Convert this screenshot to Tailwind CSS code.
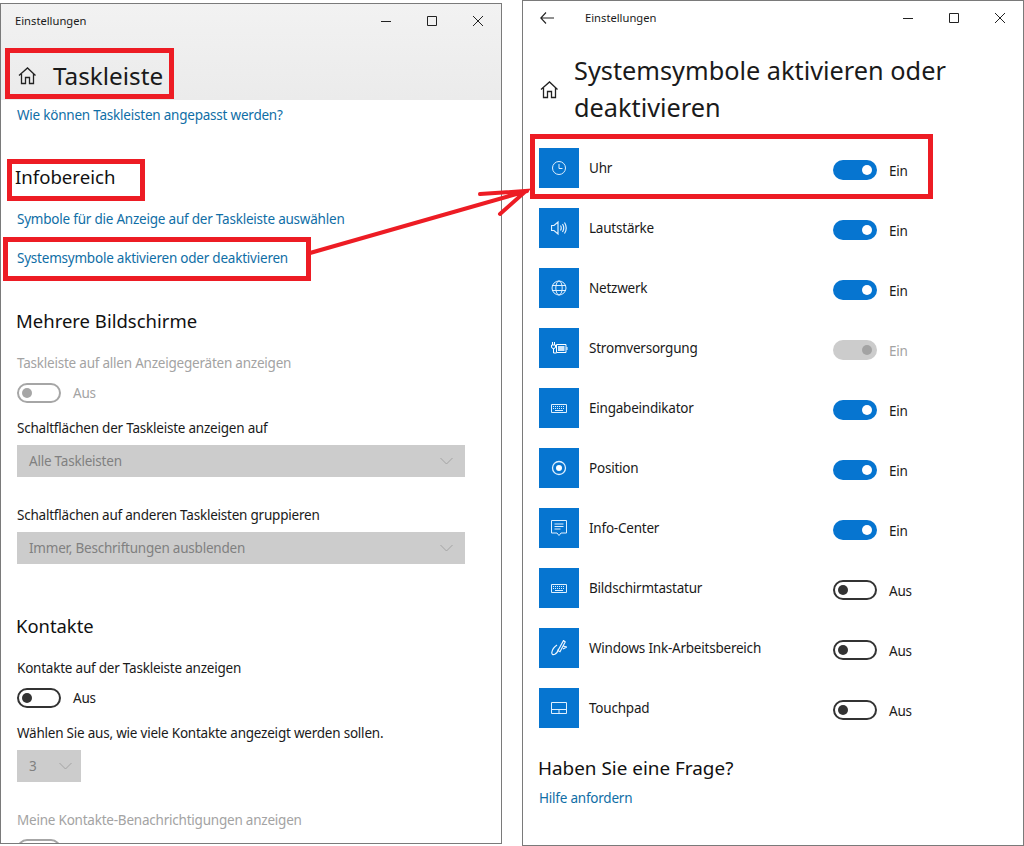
<!DOCTYPE html>
<html lang="de">
<head>
<meta charset="UTF-8">
<title>Einstellungen</title>
<script src="https://cdn.jsdelivr.net/npm/@tailwindcss/browser@4"></script>
</head>
<body class="bg-white">
<div class="relative w-[1024px] h-[846px] overflow-hidden font-['Noto_Sans',sans-serif] text-[13.5px] tracking-[-0.22px] leading-5 text-[#1a1a1a]">
  <div class="flex gap-5 items-start">

    <!-- left window -->
    <section class="mt-[3px] w-[502px] h-[841px] border border-[#7a7a7a] overflow-hidden shrink-0">
      <header class="h-[96px] bg-linear-to-b from-[#f2f2f2] to-[#ebebeb]">
        <div class="h-[34px] flex items-center pl-[14px]">
          <span class="text-[11.2px] tracking-normal">Einstellungen</span>
          <div class="ml-auto flex text-[#222]">
            <svg class="w-[46px] h-4" viewBox="0 0 46 16" fill="none" stroke="currentColor"><path d="M18 8.5h10"/></svg>
            <svg class="w-[46px] h-4" viewBox="0 0 46 16" fill="none" stroke="currentColor"><path d="M18.5 3.5h9v9h-9z"/></svg>
            <svg class="w-[46px] h-4" viewBox="0 0 46 16" fill="none" stroke="currentColor"><path d="M18 3l10 10M28 3L18 13"/></svg>
          </div>
        </div>
        <div class="flex items-center pl-[17px] mt-[9px] h-[56px]">
          <svg class="w-[19px] h-[19px]" viewBox="0 0 19 19" fill="none" stroke="#222" stroke-width="1.3"><path d="M1 9.5L9.5 2l8 7.5M3.5 8v9.5h4v-6h4v6h4V8"/></svg>
          <h1 class="ml-[16px] text-[24.3px] tracking-normal leading-8 mt-[1px]">Taskleiste</h1>
        </div>
      </header>
      <div class="pl-4">
        <a class="block mt-[5px] text-[#0f6ea6]">Wie können Taskleisten angepasst werden?</a>
        <h2 class="mt-[38px] -ml-[2px] text-[18.6px] tracking-normal leading-7 text-[#111]">Infobereich</h2>
        <a class="block mt-[18px] text-[#0f6ea6]">Symbole für die Anzeige auf der Taskleiste auswählen</a>
        <a class="block mt-[19px] text-[#0f6ea6]">Systemsymbole aktivieren oder deaktivieren</a>
        <h2 class="mt-[39px] -ml-[1px] text-[18.5px] tracking-normal leading-7 text-[#111]">Mehrere Bildschirme</h2>
        <p class="mt-[18px] text-[#a3a3a3]">Taskleiste auf allen Anzeigegeräten anzeigen</p>
        <div class="mt-[10px] flex items-center h-5">
          <span class="w-11 h-5 rounded-full border-2 border-[#a6a6a6] flex items-center pl-[3px]"><i class="w-[10px] h-[10px] rounded-full bg-[#a6a6a6]"></i></span>
          <span class="ml-3 text-[#a3a3a3]">Aus</span>
        </div>
        <p class="mt-[15px]">Schaltflächen der Taskleiste anzeigen auf</p>
        <div class="mt-[7px] w-[448px] h-8 bg-[#cccccc] flex items-center pl-3 pr-[12px] text-[#808080]">
          <span>Alle Taskleisten</span>
          <svg class="ml-auto w-[13px] h-[8px]" viewBox="0 0 13 8" fill="none" stroke="#a3a3a3"><path d="M.5 1l6 6 6-6"/></svg>
        </div>
        <p class="mt-[28px]">Schaltflächen auf anderen Taskleisten gruppieren</p>
        <div class="mt-[7px] w-[448px] h-8 bg-[#cccccc] flex items-center pl-3 pr-[12px] text-[#808080]">
          <span>Immer, Beschriftungen ausblenden</span>
          <svg class="ml-auto w-[13px] h-[8px]" viewBox="0 0 13 8" fill="none" stroke="#a3a3a3"><path d="M.5 1l6 6 6-6"/></svg>
        </div>
        <h2 class="mt-[48px] -ml-[1px] text-[18.4px] tracking-normal leading-7 text-[#111]">Kontakte</h2>
        <p class="mt-[18px]">Kontakte auf der Taskleiste anzeigen</p>
        <div class="mt-[10px] flex items-center h-5">
          <span class="w-11 h-5 rounded-full border-2 border-[#333] flex items-center pl-[3px]"><i class="w-[10px] h-[10px] rounded-full bg-[#333]"></i></span>
          <span class="ml-3">Aus</span>
        </div>
        <p class="mt-[15px]">Wählen Sie aus, wie viele Kontakte angezeigt werden sollen.</p>
        <div class="mt-[7px] w-16 h-8 bg-[#cccccc] flex items-center pl-3 pr-[9px] text-[#808080]">
          <span>3</span>
          <svg class="ml-auto w-[13px] h-[8px]" viewBox="0 0 13 8" fill="none" stroke="#a3a3a3"><path d="M.5 1l6 6 6-6"/></svg>
        </div>
        <p class="mt-[28px] text-[#a3a3a3]">Meine Kontakte-Benachrichtigungen anzeigen</p>
        <span class="block mt-[9px] w-11 h-5 rounded-full border-2 border-[#a6a6a6]"></span>
      </div>
    </section>

    <!-- right window -->
    <section class="w-[502px] h-[846px] border border-[#7a7a7a] shrink-0">
      <div class="h-[33px] flex items-center pl-[17px]">
        <svg class="w-[14px] h-[12px]" viewBox="0 0 14 12" fill="none" stroke="#222" stroke-width="1.1"><path d="M6 .5L.8 6 6 11.5M1 6h13"/></svg>
        <span class="ml-[31px] text-[11.2px] tracking-normal">Einstellungen</span>
        <div class="ml-auto flex text-[#222]">
          <svg class="w-[46px] h-4" viewBox="0 0 46 16" fill="none" stroke="currentColor"><path d="M18 8.5h10"/></svg>
          <svg class="w-[46px] h-4" viewBox="0 0 46 16" fill="none" stroke="currentColor"><path d="M18.5 3.5h9v9h-9z"/></svg>
          <svg class="w-[46px] h-4" viewBox="0 0 46 16" fill="none" stroke="currentColor"><path d="M18 3l10 10M28 3L18 13"/></svg>
        </div>
      </div>
      <div class="flex items-center pl-[17px] mt-[18px]">
        <svg class="w-[19px] h-[19px] mt-[1px]" viewBox="0 0 19 19" fill="none" stroke="#222" stroke-width="1.3"><path d="M1 9.5L9.5 2l8 7.5M3.5 8v9.5h4v-6h4v6h4V8"/></svg>
        <h1 class="ml-[15px] text-[25.3px] tracking-normal leading-[37px] w-[430px]">Systemsymbole aktivieren oder deaktivieren</h1>
      </div>
      <ul class="mt-[22px] ml-4 flex flex-col gap-5">
        <li class="flex h-10">
          <span class="w-10 h-10 bg-[#0675d0] flex items-center justify-center">
            <svg class="w-4 h-4" viewBox="0 0 16 16" fill="none" stroke="#dff0ff"><circle cx="8" cy="8" r="6.5"/><path d="M8 4v4.5h3.5"/></svg>
          </span>
          <span class="ml-[10px] w-[244px] mt-[10px]">Uhr</span>
          <span class="w-11 h-5 mt-3 rounded-full bg-[#0675d0] flex items-center justify-end pr-[5px]"><i class="w-[10px] h-[10px] rounded-full bg-white"></i></span>
          <span class="ml-3 mt-[13px]">Ein</span>
        </li>
        <li class="flex h-10">
          <span class="w-10 h-10 bg-[#0675d0] flex items-center justify-center">
            <svg class="w-4 h-4" viewBox="0 0 16 16" fill="none" stroke="#dff0ff" stroke-width="1.2"><path d="M.5 5.500h2.500l4-3.500v12l-4-3.500H.5zM9.500 5.500q1.500 2.500 0 5M11.500 4q2.500 4 0 8M13.500 2.500q3.500 5.500 0 11"/></svg>
          </span>
          <span class="ml-[10px] w-[244px] mt-[10px]">Lautstärke</span>
          <span class="w-11 h-5 mt-3 rounded-full bg-[#0675d0] flex items-center justify-end pr-[5px]"><i class="w-[10px] h-[10px] rounded-full bg-white"></i></span>
          <span class="ml-3 mt-[13px]">Ein</span>
        </li>
        <li class="flex h-10">
          <span class="w-10 h-10 bg-[#0675d0] flex items-center justify-center">
            <svg class="w-4 h-4" viewBox="0 0 16 16" fill="none" stroke="#dff0ff"><circle cx="8" cy="8" r="7"/><ellipse cx="8" cy="8" rx="3.200" ry="7"/><path d="M1 5.500h14M1 10.500h14"/></svg>
          </span>
          <span class="ml-[10px] w-[244px] mt-[10px]">Netzwerk</span>
          <span class="w-11 h-5 mt-3 rounded-full bg-[#0675d0] flex items-center justify-end pr-[5px]"><i class="w-[10px] h-[10px] rounded-full bg-white"></i></span>
          <span class="ml-3 mt-[13px]">Ein</span>
        </li>
        <li class="flex h-10">
          <span class="w-10 h-10 bg-[#0675d0] flex items-center justify-center">
            <svg class="w-[17px] h-3" viewBox="0 0 17 12" fill="none" stroke="#ffffff"><path d="M1.500 0v3M3.500 0v3M.5 3h4v2q0 1.500-2 1.500t-2-1.500zM2.500 6.500v4.500h3"/><path d="M5.500 2.500h9.500v8H5.500z"/><path d="M7 4h6.500v5H7z" fill="#cfe6fa" stroke="none"/><path d="M16 5v3"/></svg>
          </span>
          <span class="ml-[10px] w-[244px] mt-[10px]">Stromversorgung</span>
          <span class="w-11 h-5 mt-3 rounded-full bg-[#cccccc] flex items-center justify-end pr-[5px]"><i class="w-[10px] h-[10px] rounded-full bg-[#a3a3a3]"></i></span>
          <span class="ml-3 mt-[13px] text-[#a3a3a3]">Ein</span>
        </li>
        <li class="flex h-10">
          <span class="w-10 h-10 bg-[#0675d0] flex items-center justify-center">
            <svg class="w-4 h-3" viewBox="0 0 16 12" fill="none" stroke="#dff0ff"><path d="M.5 2.500h15v8H.5z"/><path d="M2 4.500h12M2 6.500h12" stroke-dasharray="1 1"/><path d="M4 8.500h8"/></svg>
          </span>
          <span class="ml-[10px] w-[244px] mt-[10px]">Eingabeindikator</span>
          <span class="w-11 h-5 mt-3 rounded-full bg-[#0675d0] flex items-center justify-end pr-[5px]"><i class="w-[10px] h-[10px] rounded-full bg-white"></i></span>
          <span class="ml-3 mt-[13px]">Ein</span>
        </li>
        <li class="flex h-10">
          <span class="w-10 h-10 bg-[#0675d0] flex items-center justify-center">
            <svg class="w-4 h-4" viewBox="0 0 16 16" fill="none" stroke="#dff0ff"><circle cx="8" cy="8" r="6.500" stroke-width="1.300"/><circle cx="8" cy="8" r="3" fill="#fff" stroke="none"/></svg>
          </span>
          <span class="ml-[10px] w-[244px] mt-[10px]">Position</span>
          <span class="w-11 h-5 mt-3 rounded-full bg-[#0675d0] flex items-center justify-end pr-[5px]"><i class="w-[10px] h-[10px] rounded-full bg-white"></i></span>
          <span class="ml-3 mt-[13px]">Ein</span>
        </li>
        <li class="flex h-10">
          <span class="w-10 h-10 bg-[#0675d0] flex items-center justify-center">
            <svg class="w-4 h-4" viewBox="0 0 16 16" fill="none" stroke="#dff0ff"><path d="M.5.5h15v12.500h-5.500L8 15.500 6 13H.5z"/><path d="M3.500 4h9M3.500 6.500h9M3.500 9h6"/></svg>
          </span>
          <span class="ml-[10px] w-[244px] mt-[10px]">Info-Center</span>
          <span class="w-11 h-5 mt-3 rounded-full bg-[#0675d0] flex items-center justify-end pr-[5px]"><i class="w-[10px] h-[10px] rounded-full bg-white"></i></span>
          <span class="ml-3 mt-[13px]">Ein</span>
        </li>
        <li class="flex h-10">
          <span class="w-10 h-10 bg-[#0675d0] flex items-center justify-center">
            <svg class="w-4 h-3" viewBox="0 0 16 12" fill="none" stroke="#dff0ff"><path d="M.5 2.500h15v8H.5z"/><path d="M2 4.500h12M2 6.500h12" stroke-dasharray="1 1"/><path d="M4 8.500h8"/></svg>
          </span>
          <span class="ml-[10px] w-[244px] mt-[10px]">Bildschirmtastatur</span>
          <span class="w-11 h-5 mt-3 rounded-full border-2 border-[#333] flex items-center pl-[3px]"><i class="w-[10px] h-[10px] rounded-full bg-[#333]"></i></span>
          <span class="ml-3 mt-[13px]">Aus</span>
        </li>
        <li class="flex h-10">
          <span class="w-10 h-10 bg-[#0675d0] flex items-center justify-center">
            <svg class="w-4 h-4" viewBox="0 0 16 16" fill="none" stroke="#eef7ff" stroke-width="1.200"><path d="M12.500.5L7 10.500l2 1.200L14.200 2zM12 6l3.500 1-3.500 2M6 5Q1.500 8 .8 12.500q0 3 3 1.800Q6.500 13 7.500 9"/></svg>
          </span>
          <span class="ml-[10px] w-[244px] mt-[10px]">Windows Ink-Arbeitsbereich</span>
          <span class="w-11 h-5 mt-3 rounded-full border-2 border-[#333] flex items-center pl-[3px]"><i class="w-[10px] h-[10px] rounded-full bg-[#333]"></i></span>
          <span class="ml-3 mt-[13px]">Aus</span>
        </li>
        <li class="flex h-10">
          <span class="w-10 h-10 bg-[#0675d0] flex items-center justify-center">
            <svg class="w-4 h-4" viewBox="0 0 16 16" fill="none" stroke="#dff0ff"><path d="M.5 2.500h15v11H.5zM.5 9.500h15M8 9.500v4"/></svg>
          </span>
          <span class="ml-[10px] w-[244px] mt-[10px]">Touchpad</span>
          <span class="w-11 h-5 mt-3 rounded-full border-2 border-[#333] flex items-center pl-[3px]"><i class="w-[10px] h-[10px] rounded-full bg-[#333]"></i></span>
          <span class="ml-3 mt-[13px]">Aus</span>
        </li>
      </ul>
      <h2 class="mt-[26px] ml-[15px] text-[18.9px] tracking-normal leading-7 text-[#111]">Haben Sie eine Frage?</h2>
      <a class="block mt-[6px] ml-4 text-[#0f6ea6]">Hilfe anfordern</a>
    </section>
  </div>

  <!-- red annotations over the screenshot -->
  <div class="absolute left-[5px] top-[48px] w-[169px] h-[51px] border-[5px] border-[#ed1c24]"></div>
  <div class="absolute left-[7px] top-[159px] w-[138px] h-[42px] border-[5px] border-[#ed1c24]"></div>
  <div class="absolute left-[3px] top-[237px] w-[308px] h-[44px] border-[5px] border-[#ed1c24]"></div>
  <div class="absolute left-[530px] top-[134px] w-[403px] h-[65px] border-[5px] border-[#ed1c24]"></div>
  <svg class="absolute left-0 top-0 w-[1024px] h-[846px] pointer-events-none" viewBox="0 0 1024 846" fill="none" stroke="#ed1c24" stroke-width="4" stroke-linecap="round"><path d="M310 253L527 191M480 194l46-3-26 23"/></svg>
</div>
</body>
</html>
